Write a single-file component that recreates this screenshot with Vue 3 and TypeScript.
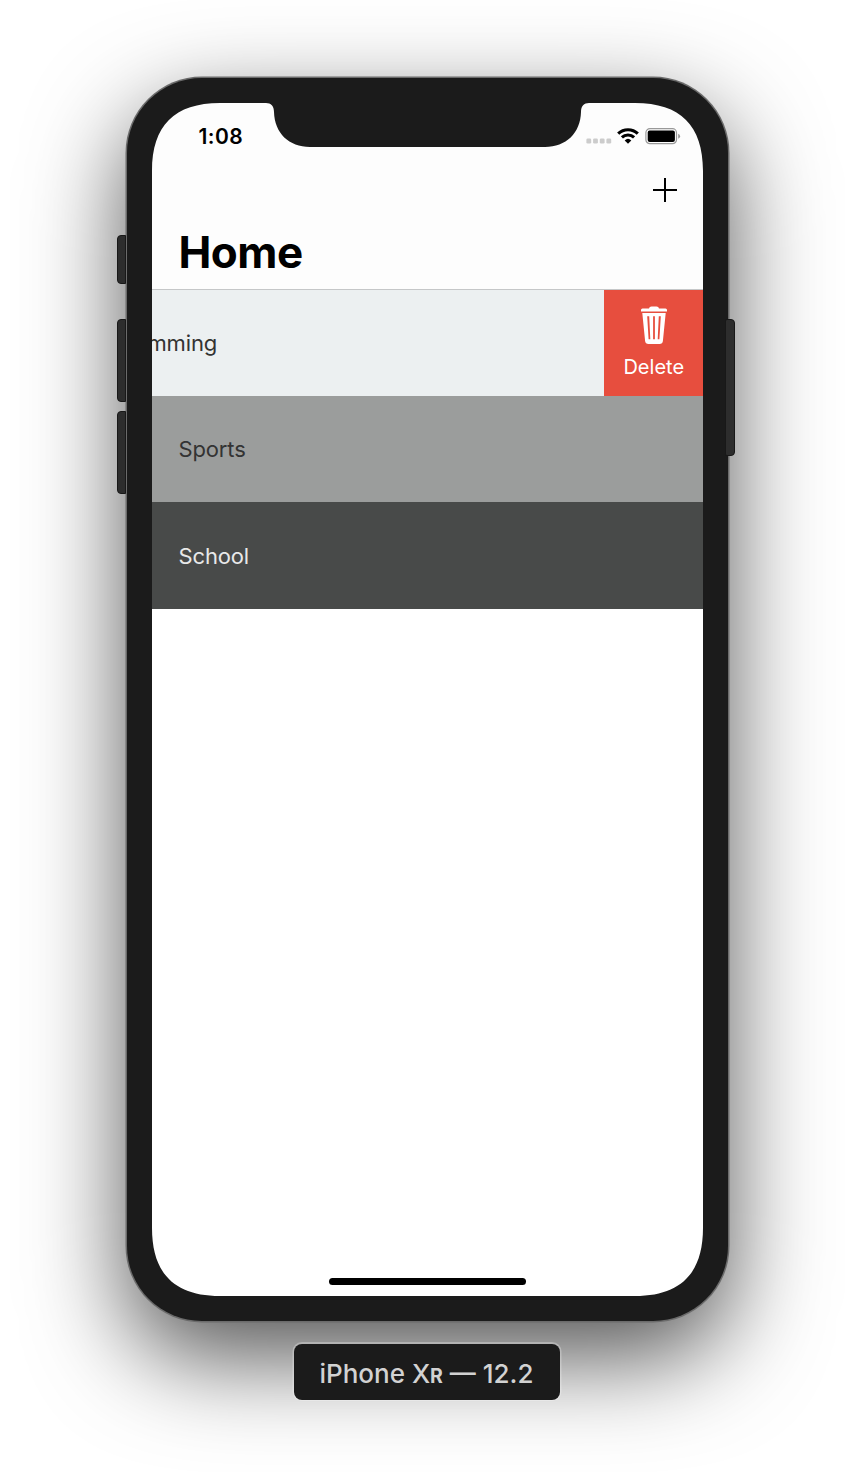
<script setup lang="ts">
interface Category {
  name: string
  tone: string
  swiped: boolean
}

const categories: Category[] = [
  { name: 'Swimming', tone: 'light', swiped: true },
  { name: 'Sports', tone: 'medium', swiped: false },
  { name: 'School', tone: 'dark', swiped: false },
]

/** Rounded rectangle whose corners ease into the straight edges. */
function softRect(x: number, y: number, w: number, h: number, a: number, k: number): string {
  const R = x + w
  const B = y + h
  return [
    `M${x + a} ${y}H${R - a}`,
    `C${R - k} ${y} ${R} ${y + k} ${R} ${y + a}V${B - a}`,
    `C${R} ${B - k} ${R - k} ${B} ${R - a} ${B}H${x + a}`,
    `C${x + k} ${B} ${x} ${B - k} ${x} ${B - a}V${y + a}`,
    `C${x} ${y + k} ${x + k} ${y} ${x + a} ${y}Z`,
  ].join('')
}

const bezel = 'M-2-2H553V1195H-2Z' + softRect(0, 0, 551, 1193, 68, 22.5)
const notch =
  'M112-1V0H114C119 0 122 3 122 9C122.500 30 137 44 158 44H393C414 44 428.500 30 429 9C429 3 432 0 437 0H439V-1Z'
</script>

<template>
  <main class="stage">
    <section class="phone">
      <i class="key mute"></i>
      <i class="key vol-up"></i>
      <i class="key vol-down"></i>
      <i class="key power"></i>
      <div class="screen">
        <header class="status">
          <time class="clock">1:08</time>
          <div class="indicators">
            <svg class="signal" width="26" height="6" viewBox="0 0 26 6">
              <g fill="#ccc">
                <rect x="0.400" y="0.500" width="4.800" height="5" rx="1.300" />
                <rect x="7.100" y="0.500" width="4.800" height="5" rx="1.300" />
                <rect x="13.800" y="0.500" width="4.800" height="5" rx="1.300" />
                <rect x="20.400" y="0.500" width="4.800" height="5" rx="1.300" />
              </g>
            </svg>
            <svg class="wifi" width="22" height="16" viewBox="0 0 22 16">
              <g fill="none" stroke="#000" stroke-width="3.100">
                <path d="M1.200 5.700a14 14 0 0 1 19.600 0" />
                <path d="M4.900 9.400a8.800 8.800 0 0 1 12.200 0" />
              </g>
              <path d="M7.700 12.400a4.800 4.800 0 0 1 6.600 0L11 15.700z" />
            </svg>
            <svg class="battery" width="36" height="17" viewBox="0 0 36 17">
              <rect x="0.900" y="0.700" width="30.600" height="15" rx="4" fill="none" stroke="#999" stroke-width="1.200" />
              <rect x="2.700" y="2.500" width="27.200" height="11.400" rx="2" />
              <path d="M33.200 5.700q1.900 0.800 1.900 2.500t-1.900 2.500z" fill="#999" />
            </svg>
          </div>
        </header>
        <nav class="toolbar">
          <svg width="24" height="24" viewBox="0 0 24 24" aria-label="Add">
            <path d="M12 0v24M0 12h24" stroke="#000" stroke-width="2" />
          </svg>
        </nav>
        <h1 class="title"><span>Home</span></h1>
        <ul class="list">
          <li v-for="c in categories" :key="c.name" class="row" :class="[c.tone, { swiped: c.swiped }]">
            <span class="name">{{ c.name }}</span>
            <button v-if="c.swiped" class="delete" type="button">
              <svg width="28" height="39" viewBox="0 0 28 39">
                <path
                  fill="#fff"
                  fill-rule="evenodd"
                  d="M9 2.400Q9.300 0.500 11.500 0.500H16.500Q18.700 0.500 19 2.400H25.500Q27 2.400 27 4V5.400H1V4Q1 2.400 2.500 2.400ZM2.300 6.900H25.700L22.900 35Q22.600 38 19.500 38H8.500Q5.400 38 5.100 35ZM7.200 10.200L8.600 33.200H10.300L9.200 10.200ZM13.100 10.200V33.200H14.900V10.200ZM18.800 10.200L17.700 33.200H19.400L20.800 10.200Z"
                />
              </svg>
              <span>Delete</span>
            </button>
          </li>
        </ul>
        <div class="home-bar"></div>
        <svg class="bezel" width="555" height="1197" viewBox="-2 -2 555 1197">
          <path :d="bezel" fill="#1b1b1b" fill-rule="evenodd" />
          <path :d="notch" fill="#1b1b1b" />
        </svg>
      </div>
    </section>
    <footer class="caption"><span>iPhone X<small>R</small> — 12.2</span></footer>
  </main>
</template>

<style>
body {
  margin: 0;
  background: #fff;
}
</style>

<style scoped>
.stage {
  box-sizing: border-box;
  width: 854px;
  height: 1472px;
  padding-top: 78px;
  display: flex;
  flex-direction: column;
  align-items: center;
  overflow: hidden;
  background: #fff;
  font-family: Inter, "Liberation Sans", sans-serif;
}
.phone {
  position: relative;
  box-sizing: border-box;
  width: 601px;
  height: 1243px;
  padding: 25px;
  border-radius: 75px;
  background: #1b1b1b;
  box-shadow: 0 0 0 1.5px #6b6b6b, 0 36px 98px rgba(0, 0, 0, 0.68);
}
.key {
  position: absolute;
  left: -10px;
  box-sizing: border-box;
  width: 9px;
  border: 1px solid #181818;
  border-radius: 4px 0 0 4px;
  background: #2d2d2d;
}
.mute { top: 157px; height: 49px; }
.vol-up { top: 241px; height: 83px; }
.vol-down { top: 333px; height: 83px; }
.power {
  top: 241px;
  left: auto;
  right: -7.500px;
  width: 10px;
  height: 137px;
  border-radius: 2px 4px 4px 2px;
}
.screen {
  position: relative;
  width: 551px;
  height: 1193px;
  display: flex;
  flex-direction: column;
  background: #fdfdfd;
}
.status {
  height: 59px;
  display: flex;
  justify-content: space-between;
  align-items: flex-start;
  padding: 20px 22px 0 46px;
  box-sizing: border-box;
}
.clock {
  margin-left: 1px;
  padding-top: 1px;
  font-size: 21px;
  line-height: 26px;
  font-weight: 600;
  letter-spacing: 0.4px;
}
.indicators {
  display: flex;
  padding-top: 4.500px;
}
.signal { margin: 10.500px 5px 0 0; }
.wifi { margin-right: 6px; }
.toolbar {
  height: 60px;
  box-sizing: border-box;
  display: flex;
  justify-content: flex-end;
  padding: 16px 26px 0 0;
}
.title {
  margin: 0;
  height: 67px;
  padding-left: 27px;
  font-size: 44px;
  line-height: 61px;
  font-weight: 700;
  letter-spacing: -0.5px;
}
.list {
  flex: 1;
  margin: 0;
  padding: 0;
  list-style: none;
  background: #fff;
}
.row {
  height: 106.500px;
  box-sizing: border-box;
  display: flex;
  align-items: center;
  padding-left: 27px;
  overflow: hidden;
  color: #333;
  font-size: 22px;
  letter-spacing: -0.15px;
}
.light {
  background: #ecf0f1;
  border-top: 1px solid #c5c7c8;
}
.medium { background: #9b9d9c; }
.dark { background: #484a49; color: #e8e9e9; }
.medium .name, .dark .name { padding-top: 1px; }
.swiped {
  padding-left: 0;
  justify-content: space-between;
}
.swiped .name { margin-left: -41px; }
.delete {
  align-self: stretch;
  width: 98.500px;
  padding: 16px 0 0 1px;
  border: 0;
  display: flex;
  flex-direction: column;
  align-items: center;
  gap: 10px;
  color: #fff;
  background: #e74e3e;
  font: 400 20px/24px Inter, "Liberation Sans", sans-serif;
}
.home-bar {
  position: absolute;
  left: 177px;
  bottom: 11px;
  width: 197px;
  height: 7px;
  border-radius: 4px;
  background: #000;
}
.bezel {
  position: absolute;
  left: -2px;
  top: -2px;
}
.caption {
  position: relative;
  margin-top: 23px;
  width: 266px;
  height: 56px;
  border-radius: 8px;
  background: #1b1b1b;
  box-shadow: 0 -0.500px 0 1.500px rgba(255, 255, 255, 0.28);
  display: flex;
  align-items: center;
  justify-content: center;
  color: #d2d2d2;
  font-size: 26px;
  line-height: 32px;
  padding: 6px 1px 0 0;
  box-sizing: border-box;
  white-space: pre;
  font-weight: 450;
}
.caption small {
  font-size: 19.500px;
  font-weight: 700;
}
</style>
